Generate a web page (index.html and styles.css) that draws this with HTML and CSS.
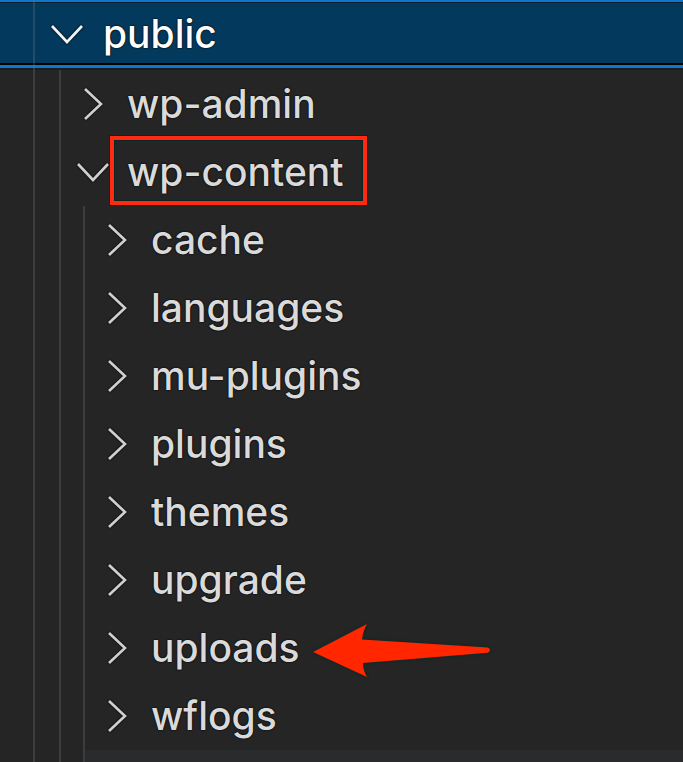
FILE: index.html
```html
<!DOCTYPE html>
<html lang="en">
<head>
<meta charset="utf-8">
<title>Explorer</title>
<link rel="stylesheet" href="styles.css">
</head>
<body>
<div class="explorer">
  <div class="row selected level0">
    <span class="twistie"><svg class="chev" viewBox="0 0 32 32"><path d="M1 8 L16 24 L31 8"/></svg></span>
    <span class="label">public</span>
  </div>
  <div class="children l1">
    <div class="row">
      <span class="twistie"><svg class="chev" viewBox="0 0 32 32"><path d="M8 1 L24 16 L8 31"/></svg></span>
      <span class="label">wp-admin</span>
    </div>
    <div class="row">
      <span class="twistie"><svg class="chev" viewBox="0 0 32 32"><path d="M1 8 L16 24 L31 8"/></svg></span>
      <span class="label boxed">wp-content</span>
    </div>
    <div class="children l2">
      <div class="row">
        <span class="twistie"><svg class="chev" viewBox="0 0 32 32"><path d="M8 1 L24 16 L8 31"/></svg></span>
        <span class="label">cache</span>
      </div>
      <div class="row">
        <span class="twistie"><svg class="chev" viewBox="0 0 32 32"><path d="M8 1 L24 16 L8 31"/></svg></span>
        <span class="label">languages</span>
      </div>
      <div class="row">
        <span class="twistie"><svg class="chev" viewBox="0 0 32 32"><path d="M8 1 L24 16 L8 31"/></svg></span>
        <span class="label">mu-plugins</span>
      </div>
      <div class="row">
        <span class="twistie"><svg class="chev" viewBox="0 0 32 32"><path d="M8 1 L24 16 L8 31"/></svg></span>
        <span class="label">plugins</span>
      </div>
      <div class="row">
        <span class="twistie"><svg class="chev" viewBox="0 0 32 32"><path d="M8 1 L24 16 L8 31"/></svg></span>
        <span class="label">themes</span>
      </div>
      <div class="row">
        <span class="twistie"><svg class="chev" viewBox="0 0 32 32"><path d="M8 1 L24 16 L8 31"/></svg></span>
        <span class="label">upgrade</span>
      </div>
      <div class="row annotated">
        <span class="twistie"><svg class="chev" viewBox="0 0 32 32"><path d="M8 1 L24 16 L8 31"/></svg></span>
        <span class="label">uploads</span>
        <svg class="arrow" viewBox="0 0 200 68" width="200" height="68"><path d="M13 38 L67 10 Q63 17 62 25.5 L188 33.5 Q192 36 188 38.7 L63 49 Q63 56 67 63 Z"/></svg>
      </div>
      <div class="row">
        <span class="twistie"><svg class="chev" viewBox="0 0 32 32"><path d="M8 1 L24 16 L8 31"/></svg></span>
        <span class="label">wflogs</span>
      </div>
      <div class="row hover"></div>
    </div>
  </div>
</div>
</body>
</html>
```

FILE: styles.css
```css
html, body {
  margin: 0;
  padding: 0;
  height: 762px;
  overflow: hidden;
  background: #252525;
}

.explorer {
  position: relative;
  font-family: Inter, "Noto Sans", "Liberation Sans", sans-serif;
  font-size: 39px;
  font-weight: 500;
  color: #dadada;
  height: 762px;
}

.explorer::before {
  content: "";
  position: absolute;
  left: 33px;
  top: 0;
  bottom: 0;
  width: 2px;
  background: rgba(120, 120, 120, 0.3);
  z-index: 2;
}

.row {
  display: flex;
  align-items: center;
  height: 68px;
  padding-left: 16px;
  box-sizing: border-box;
  white-space: nowrap;
}

.row.selected {
  padding-left: 51px;
  background: #03395c;
  border-top: 2px solid #0a78d0;
  border-bottom: 3px solid #0a78d0;
  box-shadow: inset 0 1px 0 #0c1c28, inset 0 -2px 0 #000, 0 2px 0 #1c1c1c;
  margin-bottom: 2px;
  color: #ffffff;
}

.twistie {
  flex: none;
  width: 32px;
  height: 68px;
  display: flex;
  align-items: center;
  justify-content: center;
}

.chev {
  width: 32px;
  height: 32px;
  fill: none;
  stroke: #d0d0d0;
  stroke-width: 2.6;
  stroke-linejoin: miter;
  filter: drop-shadow(0 0 1px #000);
}

.selected .chev {
  stroke: #f4f4f4;
}

.label {
  margin-left: 18px;
  line-height: 68px;
  text-shadow: 0 0 2px #000, 0 0 1px #000;
}

.selected .label {
  margin-left: 20px;
}

.children {
  border-left: 2px solid #3c3c3c;
}

.children.l1 {
  margin-left: 59px;
}

.children.l2 {
  margin-left: 22px;
}

.boxed {
  position: relative;
}

.boxed::after {
  content: "";
  position: absolute;
  left: -17px;
  width: 249px;
  top: -2px;
  bottom: 1px;
  border: 4px solid #ff2a10;
  box-shadow: 0 0 0 1px #0d2424, inset 0 0 0 1px #0d2424;
}

.annotated {
  position: relative;
}

.arrow {
  position: absolute;
  left: 215px;
  top: 0;
  fill: #ff2600;
  filter: drop-shadow(0 0 1px #0a2a2a) drop-shadow(0 0 1px #0a2a2a);
}

.row.hover {
  height: 12px;
  background: #2a2b2d;
}
```
